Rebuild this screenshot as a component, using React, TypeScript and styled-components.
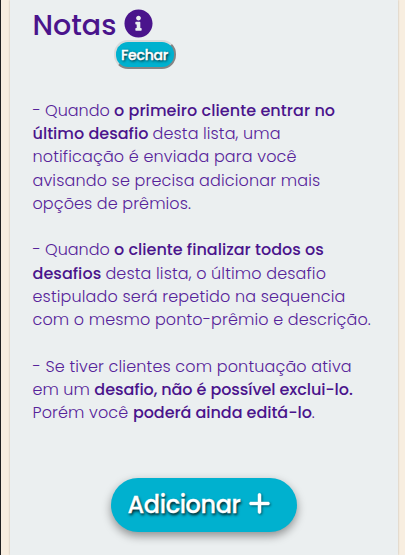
import React from 'react';
import styled, { createGlobalStyle } from 'styled-components';
import { FaInfoCircle } from 'react-icons/fa';
import { FaPlus } from 'react-icons/fa6';

const GlobalStyle = createGlobalStyle`
  * { box-sizing: border-box; }
  body {
    margin: 0;
    background: #f8eee0;
    overflow: hidden;
    font-family: Poppins, Inter, sans-serif;
    font-feature-settings: "cv11";
  }
`;

const Page = styled.div`
  height: 555px;
  padding: 0 7.5px 0 8.5px;
  border-left: 1px solid #212121;
`;

const Panel = styled.main`
  display: flex;
  flex-direction: column;
  height: 100%;
  padding: 4px 23px 0;
  background: #ebeff0;
  box-shadow: 0 0 2px rgba(0, 0, 0, 0.25);
`;

const Header = styled.header`
  display: flex;
  align-items: center;
  gap: 8px;
  height: 38px;
  color: #4a148c;
`;

const Title = styled.h1`
  margin: 0;
  font-size: 28.5px;
  font-weight: 500;
  line-height: 38px;
  padding-top: 4px;
`;

const CloseButton = styled.button`
  align-self: flex-start;
  display: flex;
  align-items: center;
  justify-content: center;
  width: 62px;
  height: 29px;
  margin: -2px 0 0 81px;
  padding: 2px 0 0;
  border: 2px solid;
  border-color: #d8dada #858585 #858585 #d8dada;
  border-radius: 14px;
  background: #00b1cf;
  color: #fff;
  font: inherit;
  font-size: 14px;
  font-weight: 500;
  letter-spacing: -0.2px;
  -webkit-text-stroke: 0.4px #fff;
  text-shadow: 1px 1px 3px #000;
`;

const Notes = styled.div`
  display: flex;
  flex-direction: column;
  gap: 23.25px;
  margin-top: 29.88px;
`;

const Note = styled.p`
  margin: 0;
  color: #4a148c;
  font-size: 16px;
  font-weight: 300;
  line-height: 23.25px;
  white-space: pre;
`;

const Run = styled.span<{ $track: number; $strong?: boolean }>`
  font-weight: ${(p) => (p.$strong ? 500 : 300)};
  letter-spacing: ${(p) => p.$track}px;
  color: ${(p) => (p.$strong ? '#4a148c' : '#56239a')};
`;

const AddButton = styled.button`
  align-self: center;
  display: flex;
  align-items: center;
  gap: 8px;
  width: 186px;
  height: 54px;
  margin-top: 53.5px;
  padding: 0 0 0 17px;
  border: 0;
  border-radius: 27px;
  background: #00b1cf;
  box-shadow: 0 4px 10px rgba(0, 0, 0, 0.4);
  color: #fff;
  font: inherit;
  font-size: 24px;
  font-weight: 500;
  letter-spacing: -0.4px;
  -webkit-text-stroke: 0.3px #fff;
  text-shadow: 1px 2px 3px rgba(0, 0, 0, 0.9);
`;

const PlusIcon = styled(FaPlus)`
  margin: -3px 0 0 -1px;
  stroke: #fff;
  stroke-width: 8px;
  filter: drop-shadow(1px 1px 1px rgba(0, 0, 0, 0.5));
`;

type Segment = { text: string; track: number; strong?: boolean };

const notes: Segment[][][] = [
  [
    [
      { text: '- Quando ', track: -0.04 },
      { text: 'o primeiro cliente entrar no', track: 0.07, strong: true },
    ],
    [
      { text: 'último desafio ', track: 0.02, strong: true },
      { text: 'desta lista, uma', track: 0.11 },
    ],
    [{ text: 'notificação é enviada para você', track: 0.15 }],
    [{ text: 'avisando se precisa adicionar mais', track: 0.15 }],
    [{ text: 'opções de prêmios.', track: 0.1 }],
  ],
  [
    [
      { text: '- Quando ', track: -0.04 },
      { text: 'o cliente finalizar todos os', track: 0.02, strong: true },
    ],
    [
      { text: 'desafios ', track: 0.04, strong: true },
      { text: 'desta lista, o último desafio', track: 0.14 },
    ],
    [{ text: 'estipulado será repetido na sequencia', track: 0.15 }],
    [{ text: 'com o mesmo ponto-prêmio e descrição.', track: 0.12 }],
  ],
  [
    [{ text: '- Se tiver clientes com pontuação ativa', track: 0.15 }],
    [
      { text: 'em um ', track: 0.05 },
      { text: 'desafio, não é possível exclui-lo.', track: -0.08, strong: true },
    ],
    [
      { text: 'Porém você ', track: 0.13 },
      { text: 'poderá ainda editá-lo', track: -0.04, strong: true },
      { text: '.', track: 0 },
    ],
  ],
];

export default function App() {
  return (
    <>
      <GlobalStyle />
      <Page>
        <Panel>
          <Header>
            <Title>Notas</Title>
            <FaInfoCircle size={29} />
          </Header>
          <CloseButton>Fechar</CloseButton>
          <Notes>
            {notes.map((lines, n) => (
              <Note key={n}>
                {lines.map((line, l) => (
                  <React.Fragment key={l}>
                    {l > 0 && '\n'}
                    {line.map((s) => (
                      <Run key={s.text} $track={s.track} $strong={s.strong}>
                        {s.text}
                      </Run>
                    ))}
                  </React.Fragment>
                ))}
              </Note>
            ))}
          </Notes>
          <AddButton>
            Adicionar
            <PlusIcon size={25} />
          </AddButton>
        </Panel>
      </Page>
    </>
  );
}
